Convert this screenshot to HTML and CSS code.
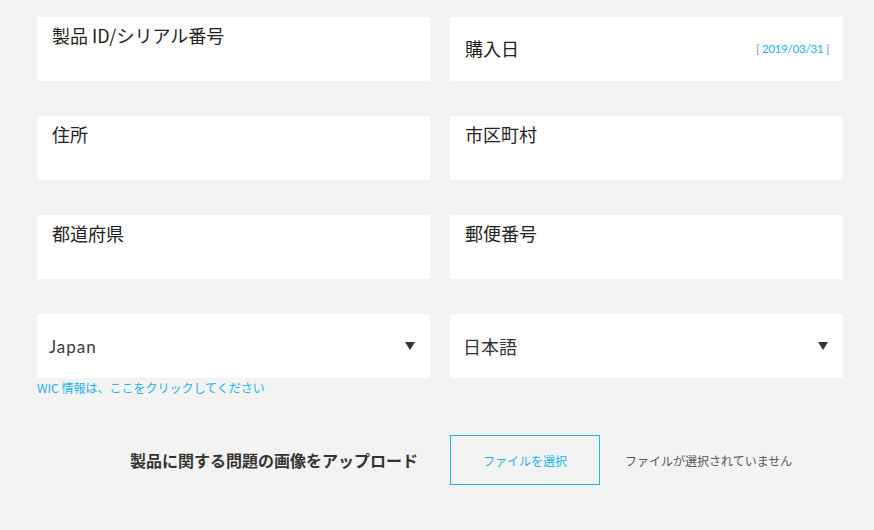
FILE: index.html
```html
<!DOCTYPE html>
<html lang="ja">
<head>
<meta charset="utf-8">
<link rel="stylesheet" href="styles.css">
</head>
<body>
<div class="page">
  <div class="grid">
    <div class="field"><span class="label">製品 ID/シリアル番号</span></div>
    <div class="field field-center"><span class="label">購入日</span><span class="date"><span class="br">[</span> 2019/03/31 <span class="br">]</span></span></div>
    <div class="field"><span class="label">住所</span></div>
    <div class="field"><span class="label">市区町村</span></div>
    <div class="field"><span class="label">都道府県</span></div>
    <div class="field"><span class="label">郵便番号</span></div>
    <div class="cell">
      <div class="select"><span class="select-text latin">Japan</span><span class="caret"></span></div>
      <a class="note">WIC 情報は、ここをクリックしてください</a>
    </div>
    <div class="cell">
      <div class="select"><span class="select-text jp">日本語</span><span class="caret"></span></div>
    </div>
  </div>
  <div class="upload">
    <div class="upload-label">製品に関する問題の画像をアップロード</div>
    <div class="upload-ctrl">
      <button class="file-btn">ファイルを選択</button>
      <span class="file-status">ファイルが選択されていません</span>
    </div>
  </div>
</div>
</body>
</html>
```

FILE: styles.css
```css
* { box-sizing: border-box; }
html, body { margin: 0; padding: 0; }
body {
  background: #f3f3f3;
  font-family: "Noto Sans CJK JP", "Noto Sans", sans-serif;
  color: #222;
  width: 874px;
  height: 530px;
  overflow: hidden;
}
.page {
  padding: 17px 31px 0 37px;
}
.grid {
  display: grid;
  grid-template-columns: 393px 393px;
  column-gap: 20px;
  row-gap: 35px;
}
.field {
  background: #fff;
  height: 64px;
  padding: 4px 14px 0 15px;
  display: flex;
  align-items: flex-start;
  justify-content: space-between;
}
.field-center { align-items: center; padding-top: 0; padding-bottom: 2px; }
.label {
  font-size: 18px;
  line-height: 28px;
  color: #222;
}
.date {
  font-family: "Lato", "Noto Sans", sans-serif;
  font-size: 12px;
  color: #17b5ee;
  letter-spacing: -0.5px;
}
.date .br { color: #8a9aa8; }
.cell { display: flex; flex-direction: column; }
.select {
  background: #fff;
  height: 64px;
  padding: 0 15px 0 12px;
  display: flex;
  align-items: center;
  justify-content: space-between;
}
.select-text { color: #333; }
.select-text.latin {
  font-family: "Lato", "Noto Sans", sans-serif;
  font-size: 17px;
  letter-spacing: 1px;
  color: #3a3a3a;
}
.select-text.jp {
  font-size: 18px;
  padding-left: 1px;
}
.caret {
  width: 0; height: 0;
  border-left: 5px solid transparent;
  border-right: 5px solid transparent;
  border-top: 8px solid #333;
}
.note {
  font-size: 12px;
  line-height: 18px;
  margin-top: 1px;
  color: #17b5ee;
}
.upload {
  display: grid;
  grid-template-columns: 393px 393px;
  column-gap: 20px;
  margin-top: 38px;
}
.upload-label {
  font-size: 16px;
  font-weight: bold;
  color: #333;
  text-align: right;
  padding-right: 12px;
  align-self: center;
}
.upload-ctrl {
  display: flex;
  align-items: center;
  gap: 25px;
}
.file-btn {
  width: 150px;
  height: 50px;
  border: 1px solid #17b5ee;
  background: transparent;
  color: #17b5ee;
  font-family: "Noto Sans CJK JP", sans-serif;
  font-size: 12px;
  padding: 0;
}
.file-status {
  font-size: 12px;
  color: #555;
}
```
